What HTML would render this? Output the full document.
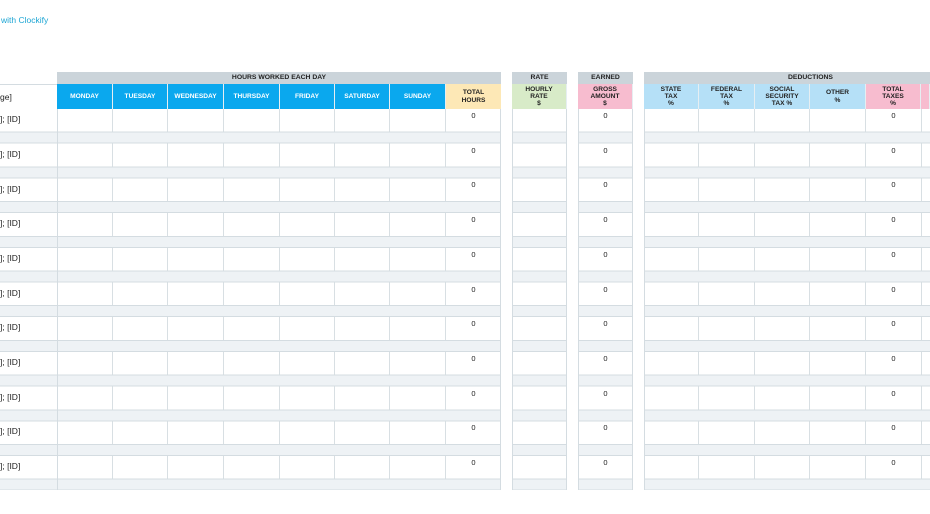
<!DOCTYPE html>
<html><head><meta charset="utf-8"><style>
*{margin:0;padding:0;box-sizing:border-box}
body{width:930px;height:514px;background:#fff;font-family:"Liberation Sans",Arial,sans-serif;position:relative;overflow:hidden}
.a{position:absolute}
.grp{position:absolute;top:72px;height:12px;background:#cbd4da;font-size:6.8px;font-weight:bold;color:#222;text-align:center;line-height:12px}
.hd{position:absolute;top:84px;height:25px;display:flex;font-size:6.6px;font-weight:bold;text-align:center;line-height:7.3px}
.hd div{border-right:1px solid #e6eef2;display:flex;align-items:center;justify-content:center;flex-direction:column}
.blue div{background:#0aa8ee;color:#fff}
.body{position:absolute;top:109px;height:381px;background:repeating-linear-gradient(to bottom,transparent 0,transparent 22.7px,#d4dce1 22.7px,#d4dce1 23.7px,#eef2f5 23.7px,#eef2f5 33.7px,#d4dce1 33.7px,#d4dce1 34.7px)}
.edge{position:absolute;top:109px;height:381px;border-left:1px solid #d4dce1;border-right:1px solid #d4dce1}
.cols{position:absolute;top:109px;height:371px;display:flex}
.cols div{border-right:1px solid #d8dfe3;height:100%;flex:none}
.z{position:absolute;font-size:7.5px;color:#222;width:55px;text-align:center}
.lb{position:absolute;left:0;font-size:8.5px;color:#222}
</style></head><body>
<div class="a" style="left:1px;top:15px;font-size:8.5px;color:#1ea6d4">with Clockify</div>

<div class="a" style="left:0;top:84px;width:57px;height:1px;background:#d4dce1"></div>
<div class="lb" style="top:92px">ge]</div>

<div class="grp" style="left:57px;width:444px">HOURS WORKED EACH DAY</div>
<div class="grp" style="left:512px;width:55px">RATE</div>
<div class="grp" style="left:578px;width:55px">EARNED</div>
<div class="grp" style="left:644px;width:286px;text-align:left;padding-left:144px">DEDUCTIONS</div>

<div class="hd blue" style="left:57px;width:444px">
<div style="width:56px">MONDAY</div><div style="width:55px">TUESDAY</div><div style="width:56px">WEDNESDAY</div><div style="width:56px">THURSDAY</div><div style="width:55px">FRIDAY</div><div style="width:55px">SATURDAY</div><div style="width:56px">SUNDAY</div><div style="width:55px;background:#fde8b6;color:#222;border-right:0">TOTAL<br>HOURS</div>
</div>
<div class="hd" style="left:512px;width:55px"><div style="width:55px;background:#d8ebc8;color:#222">HOURLY<br>RATE<br>$</div></div>
<div class="hd" style="left:578px;width:55px"><div style="width:55px;background:#f7bccf;color:#222">GROSS<br>AMOUNT<br>$</div></div>
<div class="hd" style="left:644px;width:286px;color:#222">
<div style="width:55px;background:#b5e0f7">STATE<br>TAX<br>%</div><div style="width:56px;background:#b5e0f7">FEDERAL<br>TAX<br>%</div><div style="width:55px;background:#b5e0f7">SOCIAL<br>SECURITY<br>TAX %</div><div style="width:56px;background:#b5e0f7">OTHER<br>%</div><div style="width:55px;background:#f7bccf">TOTAL<br>TAXES<br>%</div><div style="width:9px;background:#f7bccf"></div>
</div>

<div class="cols" style="left:57px"><div style="width:56px"></div><div style="width:55px"></div><div style="width:56px"></div><div style="width:56px"></div><div style="width:55px"></div><div style="width:55px"></div><div style="width:56px"></div><div style="width:55px"></div></div>
<div class="cols" style="left:644px"><div style="width:55px"></div><div style="width:56px"></div><div style="width:55px"></div><div style="width:56px"></div><div style="width:56px"></div></div>

<div class="body" style="left:0;width:57px"></div>
<div class="body" style="left:57px;width:444px"></div>
<div class="body" style="left:512px;width:55px"></div>
<div class="body" style="left:578px;width:55px"></div>
<div class="body" style="left:644px;width:286px"></div>
<div class="edge" style="left:57px;width:444px"></div>
<div class="edge" style="left:512px;width:55px"></div>
<div class="edge" style="left:578px;width:55px"></div>
<div class="edge" style="left:644px;width:290px"></div>

<div class="lb" style="top:114px">]; [ID]</div>
<div class="lb" style="top:149px">]; [ID]</div>
<div class="lb" style="top:184px">]; [ID]</div>
<div class="lb" style="top:218px">]; [ID]</div>
<div class="lb" style="top:253px">]; [ID]</div>
<div class="lb" style="top:288px">]; [ID]</div>
<div class="lb" style="top:322px">]; [ID]</div>
<div class="lb" style="top:357px">]; [ID]</div>
<div class="lb" style="top:392px">]; [ID]</div>
<div class="lb" style="top:426px">]; [ID]</div>
<div class="lb" style="top:461px">]; [ID]</div>

<div class="z" style="left:446px;top:111px">0</div><div class="z" style="left:578px;top:111px">0</div><div class="z" style="left:866px;top:111px">0</div>
<div class="z" style="left:446px;top:146px">0</div><div class="z" style="left:578px;top:146px">0</div><div class="z" style="left:866px;top:146px">0</div>
<div class="z" style="left:446px;top:180px">0</div><div class="z" style="left:578px;top:180px">0</div><div class="z" style="left:866px;top:180px">0</div>
<div class="z" style="left:446px;top:215px">0</div><div class="z" style="left:578px;top:215px">0</div><div class="z" style="left:866px;top:215px">0</div>
<div class="z" style="left:446px;top:250px">0</div><div class="z" style="left:578px;top:250px">0</div><div class="z" style="left:866px;top:250px">0</div>
<div class="z" style="left:446px;top:285px">0</div><div class="z" style="left:578px;top:285px">0</div><div class="z" style="left:866px;top:285px">0</div>
<div class="z" style="left:446px;top:319px">0</div><div class="z" style="left:578px;top:319px">0</div><div class="z" style="left:866px;top:319px">0</div>
<div class="z" style="left:446px;top:354px">0</div><div class="z" style="left:578px;top:354px">0</div><div class="z" style="left:866px;top:354px">0</div>
<div class="z" style="left:446px;top:389px">0</div><div class="z" style="left:578px;top:389px">0</div><div class="z" style="left:866px;top:389px">0</div>
<div class="z" style="left:446px;top:423px">0</div><div class="z" style="left:578px;top:423px">0</div><div class="z" style="left:866px;top:423px">0</div>
<div class="z" style="left:446px;top:458px">0</div><div class="z" style="left:578px;top:458px">0</div><div class="z" style="left:866px;top:458px">0</div>
</body></html>
